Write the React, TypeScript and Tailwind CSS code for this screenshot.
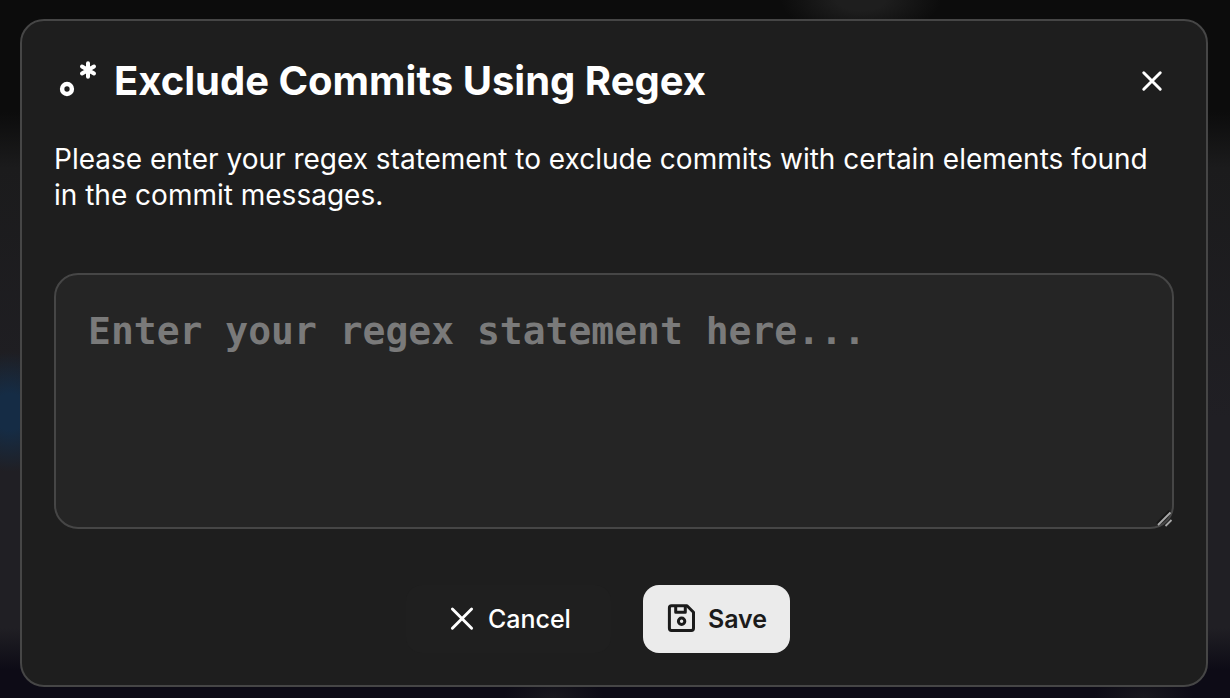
import { useState } from "react";

function CloseIcon() {
  return (
    <svg className="size-[22px]" viewBox="0 0 24 24" fill="none" stroke="currentColor" strokeWidth="3.2" strokeLinecap="round" aria-hidden="true">
      <path d="M3 3 21 21M21 3 3 21" />
    </svg>
  );
}

function CancelIcon() {
  return (
    <svg className="size-8 shrink-0" viewBox="0 0 32 32" fill="none" stroke="currentColor" strokeWidth="2.9" strokeLinecap="round" aria-hidden="true">
      <path d="M6.400 6 25.600 25.200M25.600 6 6.400 25.200" />
    </svg>
  );
}

function RegexIcon() {
  return (
    <svg className="h-10 w-11 shrink-0" viewBox="0 0 44 40" fill="none" stroke="currentColor" aria-hidden="true">
      <circle cx="13" cy="28" r="4.900" strokeWidth="4.500" />
      <path d="M34 2.200v13.600M28 5.500l12 7M40 5.500l-12 7" strokeWidth="4" strokeLinecap="round" />
    </svg>
  );
}

function SaveIcon() {
  return (
    <svg className="size-8 shrink-0" viewBox="0 0 32 32" fill="none" stroke="currentColor" strokeWidth="3" strokeLinejoin="round" aria-hidden="true">
      <path d="M5.500 2.700H21L27.500 9.200V25.300Q27.500 27.400 25.400 27.400H5.500Q3.400 27.400 3.400 25.300V4.800Q3.400 2.700 5.500 2.700Z" />
      <path d="M9.700 2.800V9.300H19.300V2.800" />
      <circle cx="15.600" cy="18.200" r="3.200" />
    </svg>
  );
}

export default function App() {
  const [pattern, setPattern] = useState("");
  return (
    <main className="min-h-screen overflow-hidden bg-[radial-gradient(60px_60px_at_0.8%_59%,#152c45_30%,#152c4500),radial-gradient(80px_36px_at_70%_0px,#1e1e1e_30%,#1e1e1e00),radial-gradient(50px_26px_at_45%_100%,#19181e,#19181e00),radial-gradient(50px_26px_at_93%_100%,#19181e,#19181e00),linear-gradient(to_bottom,#0c0c0c_16%,#1b1b1c_24%,#201f24_60%,#201f24_90%,#0d0b16_96%)] pt-[19px] pr-[22px] pb-[11px] pl-5 font-['Inter','Open_Sans',sans-serif] text-white">
      <section role="dialog" aria-labelledby="title" className="rounded-3xl border-2 border-[#464646] bg-[#1e1e1e] p-8">
        <header className="flex items-center justify-between pt-1">
          <h1 id="title" className="flex items-center gap-4 text-[40px] leading-[48px] font-bold">
            <RegexIcon />
            Exclude Commits Using Regex
          </h1>
          <button type="button" aria-label="Close" className="flex size-11 items-center justify-center">
            <CloseIcon />
          </button>
        </header>
        <p className="mt-9 text-[28px] leading-9">
          Please enter your regex statement to exclude commits with certain elements found in the commit messages.
        </p>
        <div className="relative mt-[60px]">
          <textarea
            aria-label="Regex statement"
            value={pattern}
            onChange={(e) => setPattern(e.target.value)}
            placeholder="Enter your regex statement here..."
            className="block h-64 w-full resize-none rounded-3xl border-2 border-[#464646] bg-[#252525] p-8 font-['DejaVu_Sans_Mono',monospace] text-[38px] leading-[48px] font-bold placeholder:text-[#7a7a7a]"
          />
          <svg className="pointer-events-none absolute right-0 bottom-0 size-5" viewBox="0 0 20 20" stroke="#a8a8a8" strokeWidth="1.800" aria-hidden="true">
            <path d="M2.800 14.400 15.500 1.700" stroke="#161616" />
            <path d="M4 16 16.500 3.500M11.500 17 17.500 11" />
          </svg>
        </div>
        <footer className="mt-14 flex justify-center gap-8 pr-8 text-[25px] leading-9">
          <button type="button" className="flex items-center gap-2.5 rounded-2xl bg-[#1f1f1f] px-10 py-4 font-medium">
            <CancelIcon />
            Cancel
          </button>
          <button type="button" className="flex items-center gap-2.5 rounded-2xl bg-[#ebebeb] px-[23px] py-4 font-semibold text-[#1b1b1b]">
            <SaveIcon />
            Save
          </button>
        </footer>
      </section>
    </main>
  );
}
